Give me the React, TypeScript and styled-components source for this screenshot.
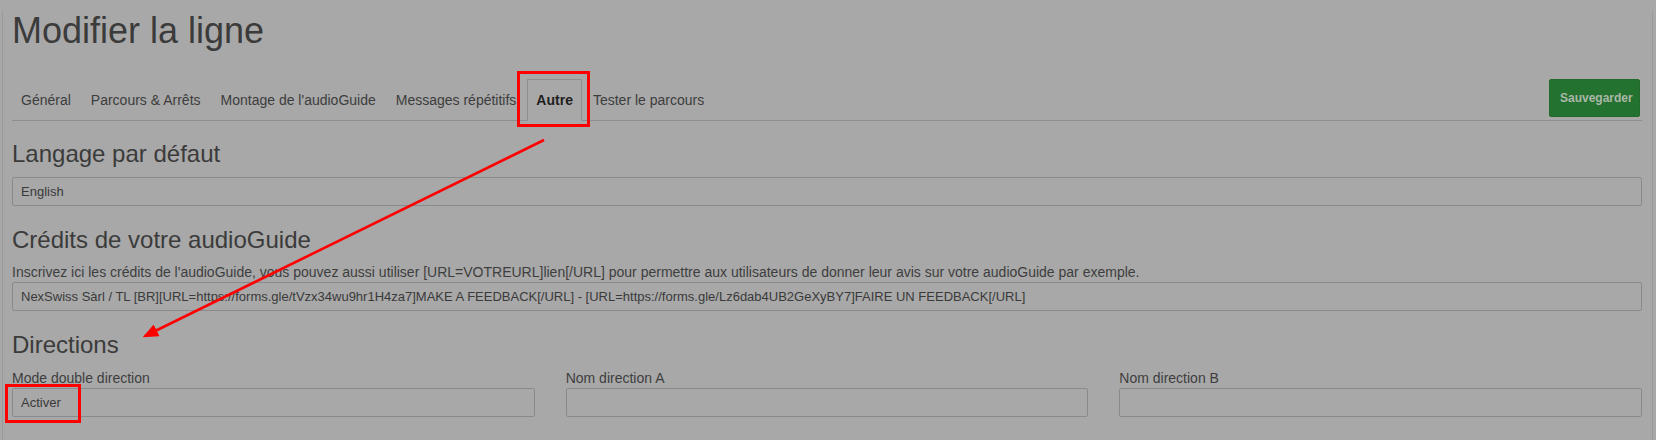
import React from "react";
import styled, { createGlobalStyle } from "styled-components";

const Global = createGlobalStyle`
  html, body { margin: 0; padding: 0; background: #a8a8a8; }
  body { font-family: "Liberation Sans", Arial, sans-serif; color: #3c3c3c; }
  * { box-sizing: border-box; }
`;

const Page = styled.div`
  position: relative;
  width: 1656px;
  height: 440px;
  overflow: hidden;
  background: #a8a8a8;
`;

const Frame = styled.div`
  margin: 0 3px 0 2px;
  height: 440px;
  border-left: 1px solid #9a9a9a;
  border-right: 1px solid #9a9a9a;
  padding: 0 10px 0 9px;
`;

const Title = styled.h1`
  margin: 11px 0 28px;
  font-size: 36px;
  line-height: 40px;
  font-weight: 400;
  color: #3b3b3b;
`;

const TabBar = styled.div`
  display: flex;
  align-items: flex-start;
  height: 42px;
  border-bottom: 1px solid #8e8e8e;
`;

const Tab = styled.div<{ $active?: boolean }>`
  position: relative;
  z-index: ${(p) => (p.$active ? 2 : 1)};
  margin-right: 2px;
  padding: 10px 8px;
  font-size: 14px;
  line-height: 20px;
  height: ${(p) => (p.$active ? "42px" : "41px")};
  border: 1px solid ${(p) => (p.$active ? "#8e8e8e" : "transparent")};
  border-bottom-color: transparent;
  background: ${(p) => (p.$active ? "#a8a8a8" : "transparent")};
  color: ${(p) => (p.$active ? "#1f1f1f" : "#3d3d3d")};
  font-weight: ${(p) => (p.$active ? 700 : 400)};
  white-space: nowrap;
`;

const TabHighlight = styled.span`
  position: absolute;
  left: -11px;
  right: -9px;
  top: -9px;
  bottom: -7px;
  border: 3px solid #ff0000;
  pointer-events: none;
`;

const SaveButton = styled.button`
  margin-left: auto;
  margin-right: 2px;
  width: 91px;
  height: 38px;
  padding: 0 10px;
  border: 1px solid #236b2d;
  border-radius: 2px;
  background: #24722f;
  color: #a9b7a9;
  font-family: "Liberation Sans", Arial, sans-serif;
  font-size: 12px;
  font-weight: 700;
`;

const SectionTitle = styled.h3<{ $first?: boolean }>`
  margin: ${(p) => (p.$first ? "20px" : "21px")} 0 10px;
  font-size: 24px;
  line-height: 26px;
  font-weight: 400;
  color: #3b3b3b;
`;

const HelpText = styled.div`
  font-size: 14px;
  line-height: 20px;
  color: #3e3e3e;
  margin-top: -1px;
`;

const Field = styled.div`
  position: relative;
  height: 29px;
  border: 1px solid #8a8a8a;
  border-radius: 2px;
  padding: 0 8px;
  font-size: 13px;
  line-height: 27px;
  color: #3a3a3a;
  white-space: nowrap;
  overflow: visible;
`;

const FieldHighlight = styled.span`
  position: absolute;
  left: -8px;
  top: -5px;
  width: 76px;
  height: 39px;
  border: 3px solid #ff0000;
  pointer-events: none;
`;

const Columns = styled.div`
  display: grid;
  grid-template-columns: repeat(3, 1fr);
  column-gap: 31px;
`;

const Group = styled.div`
  display: flex;
  flex-direction: column;
`;

const Label = styled.div`
  font-size: 14px;
  line-height: 20px;
  color: #3e3e3e;
`;

const ArrowLayer = styled.svg`
  position: absolute;
  left: 0;
  top: 0;
  pointer-events: none;
`;

const tabs = [
  "Général",
  "Parcours & Arrêts",
  "Montage de l'audioGuide",
  "Messages répétitifs",
  "Autre",
  "Tester le parcours",
];

export default function App() {
  return (
    <Page>
      <Global />
      <Frame>
        <Title>Modifier la ligne</Title>
        <TabBar>
          {tabs.map((t) => (
            <Tab key={t} $active={t === "Autre"}>
              {t}
              {t === "Autre" && <TabHighlight />}
            </Tab>
          ))}
          <SaveButton>Sauvegarder</SaveButton>
        </TabBar>

        <SectionTitle $first>Langage par défaut</SectionTitle>
        <Field>English</Field>

        <SectionTitle>Crédits de votre audioGuide</SectionTitle>
        <HelpText>
          Inscrivez ici les crédits de l'audioGuide, vous pouvez aussi utiliser
          [URL=VOTREURL]lien[/URL] pour permettre aux utilisateurs de donner
          leur avis sur votre audioGuide par exemple.
        </HelpText>
        <Field>
          NexSwiss Sàrl / TL [BR][URL=https://forms.gle/tVzx34wu9hr1H4za7]MAKE A
          FEEDBACK[/URL] - [URL=https://forms.gle/Lz6dab4UB2GeXyBY7]FAIRE UN
          FEEDBACK[/URL]
        </Field>

        <SectionTitle>Directions</SectionTitle>
        <Columns>
          <Group>
            <Label>Mode double direction</Label>
            <Field>
              Activer
              <FieldHighlight />
            </Field>
          </Group>
          <Group>
            <Label>Nom direction A</Label>
            <Field />
          </Group>
          <Group>
            <Label>Nom direction B</Label>
            <Field />
          </Group>
        </Columns>
      </Frame>

      <ArrowLayer width="1656" height="440" viewBox="0 0 1656 440">
        <defs>
          <marker
            id="head"
            markerWidth="6"
            markerHeight="5"
            refX="5"
            refY="2.5"
            orient="auto"
            markerUnits="strokeWidth"
          >
            <path d="M0,0 L6,2.5 L0,5 Z" fill="#ff0000" />
          </marker>
        </defs>
        <line
          x1="544"
          y1="140"
          x2="145"
          y2="336"
          stroke="#ff0000"
          strokeWidth="2.6"
          markerEnd="url(#head)"
        />
      </ArrowLayer>
    </Page>
  );
}
